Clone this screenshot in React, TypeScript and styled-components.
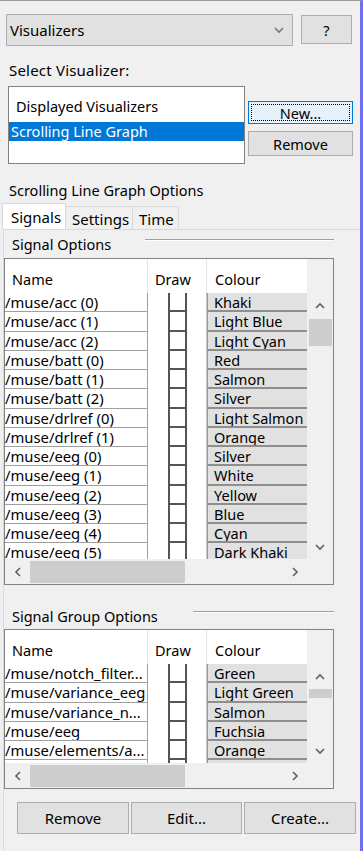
import React from "react";
import styled, { createGlobalStyle } from "styled-components";

const Global = createGlobalStyle`
  html, body { margin: 0; padding: 0; background: #f0f0f0; }
  body { font-family: "Noto Sans", "Open Sans", sans-serif; color: #000; }
  * { box-sizing: border-box; }
`;

const Window = styled.div`
  width: 363px;
  height: 851px;
  border-top: 1px solid #9c9c9c;
  border-right: 3px solid #7070f0;
  background: #f0f0f0;
  overflow: hidden;
  font-size: 14.5px;
  line-height: 20px;
`;

const TopRow = styled.div`
  display: flex;
  align-items: flex-start;
  padding: 13px 0 0 6px;
`;

const Combo = styled.div`
  width: 287px;
  height: 32px;
  border: 1px solid #adadad;
  background: #e1e1e1;
  display: flex;
  align-items: center;
  justify-content: space-between;
  padding: 0 8px 0 3px;
  font-size: 15px;
`;

const PushButton = styled.div<{ $w: number; $h: number; $focus?: boolean }>`
  width: ${(p) => p.$w}px;
  height: ${(p) => p.$h}px;
  border: 1px solid ${(p) => (p.$focus ? "#0078d7" : "#adadad")};
  background: ${(p) => (p.$focus ? "#e5f1fb" : "#e1e1e1")};
  display: flex;
  align-items: center;
  justify-content: center;
  position: relative;
  flex: none;
`;

const FocusRing = styled.span`
  position: absolute;
  inset: 2px;
  border: 1px dotted #000;
`;

const HelpButton = styled(PushButton)`
  margin: 1px 0 0 8px;
`;

const Label = styled.div<{ $top: number; $left?: number }>`
  margin-top: ${(p) => p.$top}px;
  padding-left: ${(p) => p.$left ?? 9}px;
`;

const SelectLabel = styled(Label)`
  font-size: 15px;
  letter-spacing: 0.2px;
`;

const VisRow = styled.div`
  display: flex;
  align-items: flex-start;
  margin-top: 6px;
  padding-left: 8px;
`;

const ListBox = styled.div`
  width: 237px;
  height: 78px;
  border: 1px solid #828282;
  background: #fff;
`;

const ListHeading = styled.div`
  height: 35px;
  padding: 9px 0 0 7px;
`;

const ListItem = styled.div<{ $selected?: boolean }>`
  height: 19px;
  line-height: 19px;
  padding-left: 2px;
  background: ${(p) => (p.$selected ? "#0078d7" : "transparent")};
  color: ${(p) => (p.$selected ? "#fff" : "#000")};
`;

const ButtonColumn = styled.div`
  display: flex;
  flex-direction: column;
  gap: 7px;
  margin: 15px 0 0 3px;
`;

const TabBar = styled.div`
  display: flex;
  align-items: flex-end;
  height: 26px;
  margin-top: 3px;
  padding-left: 2px;
`;

const Tab = styled.div<{ $active?: boolean; $w: number }>`
  width: ${(p) => p.$w}px;
  height: ${(p) => (p.$active ? 26 : 23)}px;
  border: 1px solid #d9d9d9;
  border-bottom: none;
  margin-left: ${(p) => (p.$active ? 0 : -1)}px;
  background: ${(p) => (p.$active ? "#fff" : "#f0f0f0")};
  padding-left: ${(p) => (p.$active ? 8 : 6)}px;
  line-height: ${(p) => (p.$active ? 26 : 24)}px;
  font-size: 15px;
`;

const Pane = styled.div`
  margin-left: 3px;
  border-left: 1px solid #d9d9d9;
  border-top: 1px solid #d9d9d9;
  height: 621px;
`;

const GroupHeader = styled.div<{ $top: number }>`
  display: flex;
  align-items: flex-start;
  width: 330px;
  margin-top: ${(p) => p.$top}px;
  padding-left: 8px;
`;

const GroupRule = styled.div<{ $w: number }>`
  width: ${(p) => p.$w}px;
  margin: 5px 0 0 auto;
  border-top: 1px solid #a0a0a0;
  border-bottom: 1px solid #ffffff;
`;

const TableFrame = styled.div<{ $top: number }>`
  margin-top: ${(p) => p.$top}px;
  width: 330px;
  border: 1px solid #828282;
  display: grid;
  grid-template-columns: 302px 26px;
  grid-template-rows: auto 25px;
  background: #f0f0f0;
`;

const Viewport = styled.div`
  background: #fff;
`;

const HeaderRow = styled.div`
  display: grid;
  grid-template-columns: 143px 59px 100px;
  height: 34px;
  background: #fff;
`;

const HeaderCell = styled.div<{ $pad: number; $sep?: boolean }>`
  padding: 10px 0 0 ${(p) => p.$pad}px;
  border-right: ${(p) => (p.$sep ? "1px solid #e5e5e5" : "none")};
`;

const Body = styled.div<{ $h: number }>`
  height: ${(p) => p.$h}px;
  overflow: hidden;
`;

const Row = styled.div`
  display: grid;
  grid-template-columns: 143px 59px 100px;
  height: 19.25px;
`;

const NameCell = styled.div`
  border-bottom: 1px solid #a0a0a0;
  border-right: 1px solid #a0a0a0;
  line-height: 19px;
  font-size: 14.8px;
  white-space: nowrap;
  overflow: hidden;
`;

const DrawCell = styled.div`
  display: flex;
  justify-content: center;
  border-right: 1px solid #c8c8c8;
`;

const DrawBox = styled.div`
  width: 19px;
  height: 100%;
  border-left: 2px solid #555;
  border-right: 2px solid #555;
  border-bottom: 2px solid #555;
`;

const ColourCell = styled.div`
  background: #e1e1e1;
  border-left: 1px solid #9a9a9a;
  border-bottom: 2px solid #8e8e8e;
  padding-left: 6px;
  line-height: 19px;
  white-space: nowrap;
  overflow: hidden;
`;

const VScroll = styled.div<{ $head: number }>`
  display: flex;
  flex-direction: column;
  padding-top: ${(p) => p.$head}px;
  background: #f0f0f0;
`;

const ArrowBox = styled.div`
  height: 25px;
  flex: none;
  display: flex;
  align-items: center;
  justify-content: center;
`;

const Track = styled.div`
  flex: 1;
  padding: 0 1px 0 2px;
`;

const VThumb = styled.div<{ $top: number; $h: number }>`
  margin-top: ${(p) => p.$top}px;
  height: ${(p) => p.$h}px;
  background: #cdcdcd;
`;

const HScroll = styled.div`
  display: flex;
  background: #f0f0f0;
`;

const HArrow = styled.div`
  width: 25px;
  flex: none;
  display: flex;
  align-items: center;
  justify-content: center;
`;

const HTrack = styled.div`
  flex: 1;
  padding-top: 2px;
`;

const HThumb = styled.div`
  width: 155px;
  height: 22px;
  background: #cdcdcd;
`;

const Corner = styled.div`
  background: #f0f0f0;
`;

const BottomBar = styled.div`
  display: flex;
  gap: 2px;
  margin-top: 13px;
  padding-left: 13px;
  font-size: 15px;
`;

const Chevron = ({ dir, color = "#606060" }: { dir: "up" | "down" | "left" | "right"; color?: string }) => {
  const pts: Record<string, string> = {
    up: "1,6 5,2 9,6",
    down: "1,2 5,6 9,2",
    left: "6,1 2,5 6,9",
    right: "2,1 6,5 2,9",
  };
  const vertical = dir === "up" || dir === "down";
  return (
    <svg width={vertical ? 10 : 8} height={vertical ? 8 : 10} viewBox={vertical ? "0 0 10 8" : "0 0 8 10"}>
      <polyline points={pts[dir]} fill="none" stroke={color} strokeWidth="1.6" />
    </svg>
  );
};

type TableProps = {
  top: number;
  rows: [string, string][];
  bodyHeight: number;
  thumbTop: number;
  thumbHeight: number;
};

const SignalTable = ({ top, rows, bodyHeight, thumbTop, thumbHeight }: TableProps) => (
  <TableFrame $top={top}>
    <Viewport>
      <HeaderRow>
        <HeaderCell $pad={7} $sep>Name</HeaderCell>
        <HeaderCell $pad={7} $sep>Draw</HeaderCell>
        <HeaderCell $pad={8}>Colour</HeaderCell>
      </HeaderRow>
      <Body $h={bodyHeight}>
        {rows.map(([name, colour], i) => (
          <Row key={i}>
            <NameCell>{name}</NameCell>
            <DrawCell>
              <DrawBox />
            </DrawCell>
            <ColourCell>{colour}</ColourCell>
          </Row>
        ))}
      </Body>
    </Viewport>
    <VScroll $head={34}>
      <ArrowBox>
        <Chevron dir="up" />
      </ArrowBox>
      <Track>
        <VThumb $top={thumbTop} $h={thumbHeight} />
      </Track>
      <ArrowBox>
        <Chevron dir="down" />
      </ArrowBox>
    </VScroll>
    <HScroll>
      <HArrow>
        <Chevron dir="left" />
      </HArrow>
      <HTrack>
        <HThumb />
      </HTrack>
      <HArrow>
        <Chevron dir="right" />
      </HArrow>
    </HScroll>
    <Corner />
  </TableFrame>
);

const signalRows: [string, string][] = [
  ["/muse/acc (0)", "Khaki"],
  ["/muse/acc (1)", "Light Blue"],
  ["/muse/acc (2)", "Light Cyan"],
  ["/muse/batt (0)", "Red"],
  ["/muse/batt (1)", "Salmon"],
  ["/muse/batt (2)", "Silver"],
  ["/muse/drlref (0)", "Light Salmon"],
  ["/muse/drlref (1)", "Orange"],
  ["/muse/eeg (0)", "Silver"],
  ["/muse/eeg (1)", "White"],
  ["/muse/eeg (2)", "Yellow"],
  ["/muse/eeg (3)", "Blue"],
  ["/muse/eeg (4)", "Cyan"],
  ["/muse/eeg (5)", "Dark Khaki"],
];

const groupRows: [string, string][] = [
  ["/muse/notch_filter...", "Green"],
  ["/muse/variance_eeg", "Light Green"],
  ["/muse/variance_n...", "Salmon"],
  ["/muse/eeg", "Fuchsia"],
  ["/muse/elements/a...", "Orange"],
  ["/muse/elements/b...", "Silver"],
];

export default function App() {
  return (
    <>
      <Global />
      <Window>
        <TopRow>
          <Combo>
            <span>Visualizers</span>
            <Chevron dir="down" color="#777" />
          </Combo>
          <HelpButton $w={51} $h={29}>?</HelpButton>
        </TopRow>
        <SelectLabel $top={14}>Select Visualizer:</SelectLabel>
        <VisRow>
          <ListBox>
            <ListHeading>Displayed Visualizers</ListHeading>
            <ListItem $selected>Scrolling Line Graph</ListItem>
          </ListBox>
          <ButtonColumn>
            <PushButton $w={105} $h={23} $focus>
              <FocusRing />
              New...
            </PushButton>
            <PushButton $w={105} $h={25}>Remove</PushButton>
          </ButtonColumn>
        </VisRow>
        <Label $top={16}>Scrolling Line Graph Options</Label>
        <TabBar>
          <Tab $active $w={64}>Signals</Tab>
          <Tab $w={68}>Settings</Tab>
          <Tab $w={47}>Time</Tab>
        </TabBar>
        <Pane>
          <GroupHeader $top={4}>
            <span>Signal Options</span>
            <GroupRule $w={189} />
          </GroupHeader>
          <SignalTable top={4} rows={signalRows} bodyHeight={266} thumbTop={1} thumbHeight={27} />
          <GroupHeader $top={21}>
            <span>Signal Group Options</span>
            <GroupRule $w={141} />
          </GroupHeader>
          <SignalTable top={3} rows={groupRows} bodyHeight={99} thumbTop={0} thumbHeight={9} />
          <BottomBar>
            <PushButton $w={112} $h={32}>Remove</PushButton>
            <PushButton $w={111} $h={32}>Edit...</PushButton>
            <PushButton $w={112} $h={32}>Create...</PushButton>
          </BottomBar>
        </Pane>
      </Window>
    </>
  );
}
